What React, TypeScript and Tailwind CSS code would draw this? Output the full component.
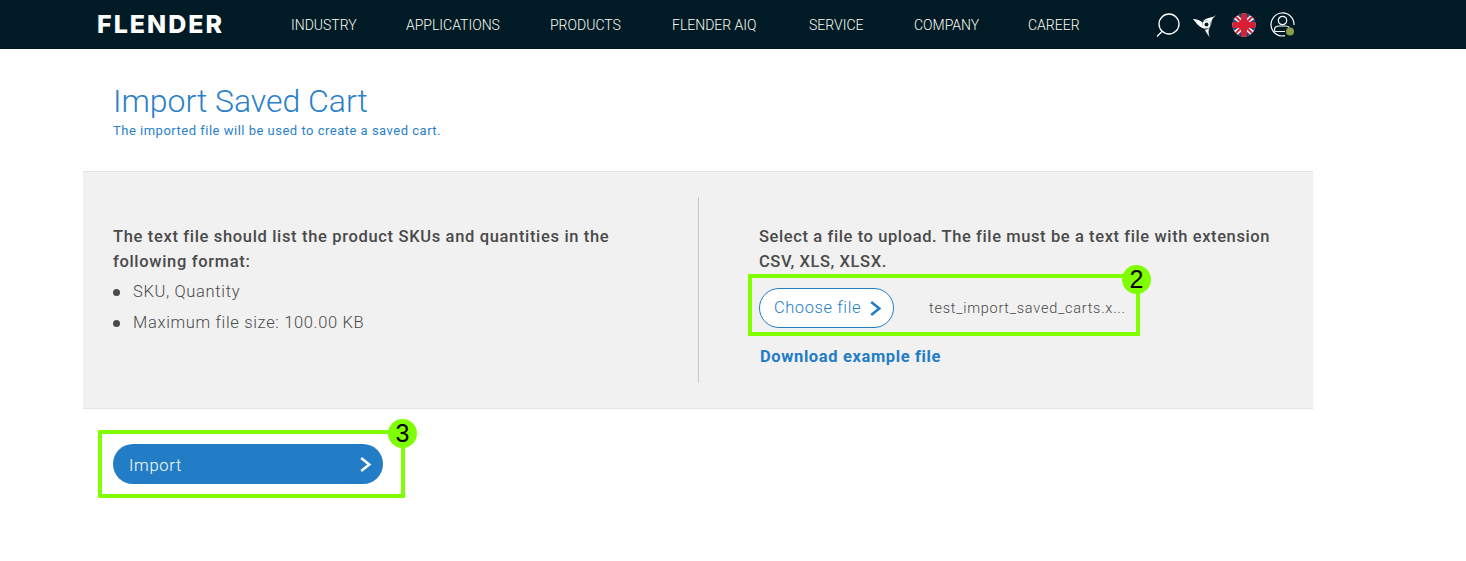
const navItems = [
  { label: "INDUSTRY", width: "w-[65px]" },
  { label: "APPLICATIONS", width: "w-[94px]" },
  { label: "PRODUCTS", width: "w-[72px]" },
  { label: "FLENDER AIQ", width: "w-[87px]" },
  { label: "SERVICE", width: "w-[55px]" },
  { label: "COMPANY", width: "w-[64px]" },
  { label: "CAREER", width: "w-[52px]" },
];

const Badge = ({ n, className }: { n: string; className: string }) => (
  <span className={`absolute flex h-[29px] w-[29px] items-center justify-center rounded-full bg-[#7fff00] text-[25px] leading-none text-black font-['Liberation_Sans',sans-serif] ${className}`}>
    {n}
  </span>
);

const Chevron = ({ className }: { className: string }) => (
  <svg viewBox="0 0 12 15" fill="none" stroke="currentColor" strokeWidth="2.4" className={className}>
    <path d="M2 1.5 L9.5 7.5 L2 13.5" />
  </svg>
);

const HeaderIcons = () => (
  <div className="flex items-center">
    {/* search */}
    <svg width="24" height="26" viewBox="0 0 24 26" fill="none" stroke="white" strokeWidth="1.3">
      <circle cx="13" cy="12" r="10" />
      <path d="M6 19.5 L1 24.5" />
    </svg>
    {/* flender mark */}
    <svg width="24" height="26" viewBox="0 0 24 26" fill="white" className="ml-[13px]">
      <path d="M0 7 C4 7 7 8.5 9.5 10.5 C9 13 10.5 15.5 12.5 17 C7 16 3 11 0 7 Z" />
      <path d="M23.5 3 C19 6 14 5 9.5 9.5 C13 7.5 17.5 8 18.5 13 C18 9 19 6 23.5 3 Z" />
      <path d="M17 25.5 C15 21 15 18 17.5 14.5 C16 17 14 17.5 12 17.5 C12.5 20 15 23 17 25.5 Z" />
      <circle cx="13.5" cy="12.5" r="4" />
      <circle cx="13.5" cy="12.5" r="2" fill="#011b26" />
    </svg>
    {/* uk flag */}
    <svg width="24" height="24" viewBox="0 0 24 24" className="ml-[15px]">
      <defs>
        <clipPath id="flag">
          <circle cx="12" cy="12" r="11.5" />
        </clipPath>
      </defs>
      <g clipPath="url(#flag)">
        <rect width="24" height="24" fill="#f4f4f4" />
        <path d="M3 0 L10 0 L10 6 Z M14 0 L21 0 L14 6 Z M0 5 L6 9 L0 9 Z M24 5 L18 9 L24 9 Z M0 15 L6 15 L0 19 Z M24 15 L18 15 L24 19 Z M10 24 L3 24 L10 18 Z M14 24 L21 24 L14 18 Z" fill="#27407f" />
        <path d="M2 2 L9 9 M22 2 L15 9 M2 22 L9 15 M22 22 L15 15" stroke="#d81f36" strokeWidth="1.8" />
        <rect x="9" width="6" height="24" fill="#d81f36" />
        <rect y="9" width="24" height="6" fill="#d81f36" />
      </g>
    </svg>
    {/* account */}
    <svg width="26" height="26" viewBox="0 0 26 26" fill="none" stroke="white" strokeWidth="1.2" className="ml-[14px]">
      <path d="M15 23.7 A11.5 11.5 0 1 1 24 13" />
      <circle cx="12.5" cy="8.5" r="4.2" />
      <path d="M4.5 19.5 L4.5 17.5 C4.5 15 7 14 9.5 14 L15.5 14 C17.5 14 18.5 14.5 19.5 15.5 M4.5 19.5 L15 19.5" />
      <circle cx="20" cy="19.5" r="4" fill="#8a9f4e" stroke="none" />
    </svg>
  </div>
);

export default function App() {
  return (
    <div className="relative h-[561px] w-[1466px] overflow-hidden bg-white font-['Roboto',sans-serif] text-[#4a4a4a]">
      <header className="flex h-[49px] items-center bg-[#011b26] pl-[97px] text-white">
        <span className="w-[194px] font-['Inter',sans-serif] text-[25px] font-extrabold leading-none tracking-[2px]">FLENDER</span>
        <nav className="flex w-[865px] gap-[50px] pt-[2px] text-[14px] font-light whitespace-nowrap text-[#fbfbf0]">
          {navItems.map((item) => (
            <a key={item.label} className={item.width}>{item.label}</a>
          ))}
        </nav>
        <HeaderIcons />
      </header>

      <main className="ml-[83px] w-[1230px]">
        <div className="h-[122px] pl-[30px] pt-[32px] text-[#2a7fc9]">
          <h1 className="text-[32px] font-light leading-[40px] tracking-[-0.03px]">Import Saved Cart</h1>
          <p className="mt-px text-[13px] leading-[18px] tracking-[0.5px]">The imported file will be used to create a saved cart.</p>
        </div>

        <section className="flex h-[238px] border-y border-[#e2e2e2] bg-[#f1f1f1] py-[25px]">
          <div className="w-[616px] border-r border-[#c9c9c9] pl-[30px] pt-[27px]">
            <p className="w-[510px] text-[16.5px] font-medium leading-[25px] tracking-[0.66px]">
              The text file should list the product SKUs and quantities in the following format:
            </p>
            <ul className="mt-[3px] text-[16.5px] font-light tracking-[0.66px]">
              <li className="flex h-[31px] items-center gap-[13px]">
                <span className="h-[7px] w-[7px] rounded-full bg-[#4a4a4a]" />
                SKU, Quantity
              </li>
              <li className="flex h-[31px] items-center gap-[13px]">
                <span className="h-[7px] w-[7px] rounded-full bg-[#4a4a4a]" />
                Maximum file size: 100.00 KB
              </li>
            </ul>
          </div>
          <div className="pl-[60px] pt-[27px]">
            <p className="w-[520px] text-[16.5px] font-medium leading-[25px] tracking-[0.6px]">
              Select a file to upload. The file must be a text file with extension CSV, XLS, XLSX.
            </p>
            <div className="mt-[14px] flex items-center">
              <button className="flex h-[40px] w-[135px] items-center justify-center gap-[8px] rounded-full border border-[#237dc6] bg-white pl-[3px] text-[16.5px] font-light tracking-[0.6px] text-[#237dc6]">
                Choose file
                <Chevron className="h-[17px] w-[13px]" />
              </button>
              <span className="ml-[35px] pt-[2px] text-[14.5px] font-light tracking-[0.74px]">test_import_saved_carts.x...</span>
            </div>
            <a className="ml-px mt-[17px] block text-[16.5px] font-bold leading-[24px] tracking-[0.62px] text-[#237dc6]">Download example file</a>
          </div>
        </section>

        <button className="ml-[30px] mt-[35px] flex h-[40px] w-[270px] items-center justify-between rounded-full bg-[#237dc6] pl-[16px] pr-[11px] text-[16.5px] font-light tracking-[0.7px] text-white">
          <span className="pt-[4px]">Import</span>
          <Chevron className="h-[17px] w-[13px]" />
        </button>
      </main>

      {/* annotation overlays */}
      <div className="absolute left-[748px] top-[274px] h-[62px] w-[392px] border-4 border-[#7fff00]" />
      <Badge n="2" className="left-[1122px] top-[265px]" />
      <div className="absolute left-[98px] top-[430px] h-[68px] w-[307px] border-4 border-[#7fff00]" />
      <Badge n="3" className="left-[388px] top-[419px]" />
    </div>
  );
}
